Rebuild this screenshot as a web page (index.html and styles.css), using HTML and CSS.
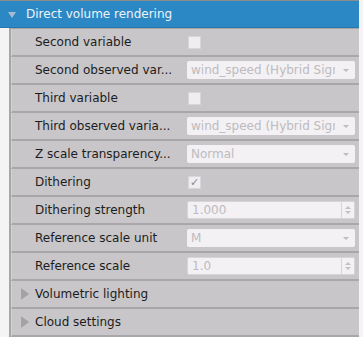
FILE: index.html
```html
<!DOCTYPE html>
<html lang="en">
<head>
    <meta charset="UTF-8">
    <title>Direct volume rendering</title>
    <link rel="stylesheet" href="styles.css">
</head>
<body>

<div class="panel">
    <div class="group-header">
        <span class="arrow-down"></span>
        <span>Direct volume rendering</span>
    </div>

    <div class="rows">
        <div class="row">
            <div class="label">Second variable</div>
            <div class="value"><span class="check"></span></div>
        </div>
        <div class="row">
            <div class="label">Second observed var...</div>
            <div class="value"><div class="combo"><span>wind_speed (Hybrid Sigma</span></div></div>
        </div>
        <div class="row">
            <div class="label">Third variable</div>
            <div class="value"><span class="check"></span></div>
        </div>
        <div class="row">
            <div class="label">Third observed varia...</div>
            <div class="value"><div class="combo"><span>wind_speed (Hybrid Sigma</span></div></div>
        </div>
        <div class="row">
            <div class="label">Z scale transparency...</div>
            <div class="value"><div class="combo"><span>Normal</span></div></div>
        </div>
        <div class="row">
            <div class="label">Dithering</div>
            <div class="value"><span class="check checked">&#10003;</span></div>
        </div>
        <div class="row">
            <div class="label">Dithering strength</div>
            <div class="value">
                <div class="spin"><div class="spin-text">1.000</div><div class="spin-btn"></div></div>
            </div>
        </div>
        <div class="row">
            <div class="label">Reference scale unit</div>
            <div class="value"><div class="combo"><span>M</span></div></div>
        </div>
        <div class="row">
            <div class="label">Reference scale</div>
            <div class="value">
                <div class="spin"><div class="spin-text">1.0</div><div class="spin-btn"></div></div>
            </div>
        </div>
        <div class="row sub-group">
            <span class="arrow-right"></span>
            <span>Volumetric lighting</span>
        </div>
        <div class="row sub-group">
            <span class="arrow-right"></span>
            <span>Cloud settings</span>
        </div>
    </div>
</div>

</body>
</html>
```

FILE: styles.css
```css
body {
    margin: 0;
    background-color: #f4f4f4;
    font-family: "DejaVu Sans", sans-serif;
    font-size: 12px;
}
.panel {
    width: 359px;
}
.group-header {
    height: 26px;
    display: flex;
    align-items: center;
    gap: 10px;
    padding-left: 8px;
    background-color: #2b88c5;
    border-top: 1px solid #8a8c90;
    border-bottom: 1px solid #2478b0;
    color: #eef3f8;
    font-size: 12px;
}
.arrow-down {
    width: 0;
    height: 0;
    border-left: 4px solid transparent;
    border-right: 4px solid transparent;
    border-top: 6px solid #a7bcd0;
    margin-top: 2px;
}
.rows {
    margin-left: 9px;
    border-left: 2px solid #a8a6a9;
    border-top: 1px solid #a6a4a7;
}
.row {
    height: 26px;
    display: grid;
    grid-template-columns: 175px 1fr;
    align-items: center;
    background-color: #c8c6c9;
    border-bottom: 2px solid #a9a7aa;
    border-left: 1px solid #d4d2d5;
    color: #1c1c1c;
}
.label {
    padding-left: 23px;
    white-space: nowrap;
    overflow: hidden;
}
.value {
    padding-right: 4px;
    display: flex;
    align-items: center;
    min-width: 0;
}
.check {
    width: 11px;
    height: 11px;
    background-color: #efedf0;
    border: 1px solid #d8d6d9;
    margin-left: 1px;
    color: #8a8a8a;
    font-size: 11px;
    line-height: 11px;
    text-align: center;
}
.combo {
    flex: 1;
    min-width: 0;
    height: 18px;
    line-height: 18px;
    padding-left: 4px;
    padding-right: 20px;
    background-color: #f3f1f4;
    border-radius: 2px;
    color: #bdbbbe;
    position: relative;
}
.combo span {
    display: block;
    white-space: nowrap;
    overflow: hidden;
}
.combo::after {
    content: "";
    position: absolute;
    right: 6px;
    top: 8px;
    border-left: 3px solid transparent;
    border-right: 3px solid transparent;
    border-top: 3px solid #bdbbbe;
}
.spin {
    flex: 1;
    display: flex;
    height: 18px;
}
.spin-text {
    flex: 1;
    line-height: 16px;
    padding-left: 4px;
    background-color: #f3f1f4;
    border: 1px solid #d6d4d7;
    border-radius: 2px 0 0 2px;
    color: #bdbbbe;
}
.spin-btn {
    width: 12px;
    background-color: #f3f1f4;
    border: 1px solid #d6d4d7;
    border-left: none;
    border-radius: 0 2px 2px 0;
    position: relative;
}
.spin-btn::before {
    content: "";
    position: absolute;
    left: 3px;
    top: 4px;
    border-left: 3px solid transparent;
    border-right: 3px solid transparent;
    border-bottom: 3px solid #c4c2c5;
}
.spin-btn::after {
    content: "";
    position: absolute;
    left: 3px;
    top: 9px;
    border-left: 3px solid transparent;
    border-right: 3px solid transparent;
    border-top: 3px solid #c4c2c5;
}
.sub-group {
    display: flex;
    gap: 6px;
    padding-left: 9px;
}
.arrow-right {
    width: 0;
    height: 0;
    border-top: 6px solid transparent;
    border-bottom: 6px solid transparent;
    border-left: 8px solid #a4a2a5;
}
```
